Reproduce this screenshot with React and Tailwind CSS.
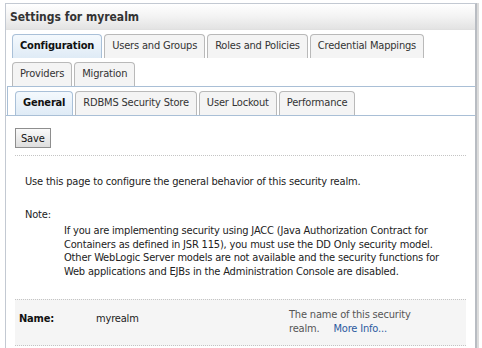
function Tab({ label, active, bold }) {
  return (
    <div
      className={
        "h-[24px] px-[7px] flex items-center rounded-t-[4px] border border-b-0 whitespace-nowrap " +
        (active
          ? "bg-gradient-to-b from-[#f4f9fd] to-[#dfebf6] border-[#a9c0d8] text-[#111]"
          : "bg-[#f4f4f4] border-[#b9b9b9] text-[#333]") +
        (bold ? " font-bold" : "")
      }
    >
      {label}
    </div>
  );
}

export default function App() {
  return (
    <div
      className="w-[482px] h-[348px] bg-white overflow-hidden text-[11px] tracking-[-0.18px] text-[#222] pt-[3px] pl-[5px]"
      style={{ fontFamily: '"DejaVu Sans Condensed", "DejaVu Sans", sans-serif' }}
    >
      <div className="w-[472px] h-[400px] border-l border-t border-[#c3c9d2] border-r-[2px] border-r-[#b8bcc2] shadow-[2px_0_0_#dcdcdc]">
        <div className="h-[26px] bg-gradient-to-b from-[#ffffff] via-[#f3f3f3] to-[#e3e3e3] border-b border-[#e0e0e0] flex items-center pl-[4px] font-bold text-[12px] tracking-normal text-[#333]">
          Settings for myrealm
        </div>

        <div className="pl-[6px] pt-[4px]">
          <div className="flex gap-[2px]">
            <Tab label="Configuration" active bold />
            <Tab label="Users and Groups" />
            <Tab label="Roles and Policies" />
            <Tab label="Credential Mappings" />
          </div>
          <div className="flex gap-[2px] mt-[4px]">
            <Tab label="Providers" />
            <Tab label="Migration" />
          </div>
        </div>

        <div className="ml-[1px] border-t border-l border-[#a9bfd6] pl-[7px] pt-[4px] h-[29px]">
          <div className="flex gap-[2px]">
            <Tab label="General" active bold />
            <Tab label="RDBMS Security Store" />
            <Tab label="User Lockout" />
            <Tab label="Performance" />
          </div>
        </div>

        <div className="border-t border-[#a9bfd6] px-[9px] pt-[12px]">
          <button className="h-[20px] px-[5px] border border-[#8e8e8e] bg-gradient-to-b from-[#fafafa] to-[#dedede] text-[#111] text-[11px] leading-none">
            Save
          </button>
          <div className="mt-[7px] border-t border-dotted border-[#c4c4c4]" />

          <p className="mt-[18px] pl-[10px]">
            Use this page to configure the general behavior of this security realm.
          </p>

          <p className="mt-[16px] pl-[10px]">Note:</p>
          <p className="mt-[1px] pl-[49px] leading-[13.5px] pr-[8px]">
            If you are implementing security using JACC (Java Authorization Contract for
            Containers as defined in JSR 115), you must use the DD Only security model.
            Other WebLogic Server models are not available and the security functions for
            Web applications and EJBs in the Administration Console are disabled.
          </p>

          <div className="mt-[21px] h-[47px] bg-[#f5f5f5] border-y border-dotted border-[#c4c4c4] flex">
            <div className="w-[81px] pl-[4px] pt-[11px] font-bold text-[#111]">Name:</div>
            <div className="w-[193px] pt-[11px]">myrealm</div>
            <div className="pt-[8px] text-[#555] leading-[14px]">
              The name of this security
              <br />
              realm.{" "}
              <span className="ml-[11px] text-[#2c5aa0]">More Info...</span>
            </div>
          </div>
        </div>
      </div>
    </div>
  );
}
